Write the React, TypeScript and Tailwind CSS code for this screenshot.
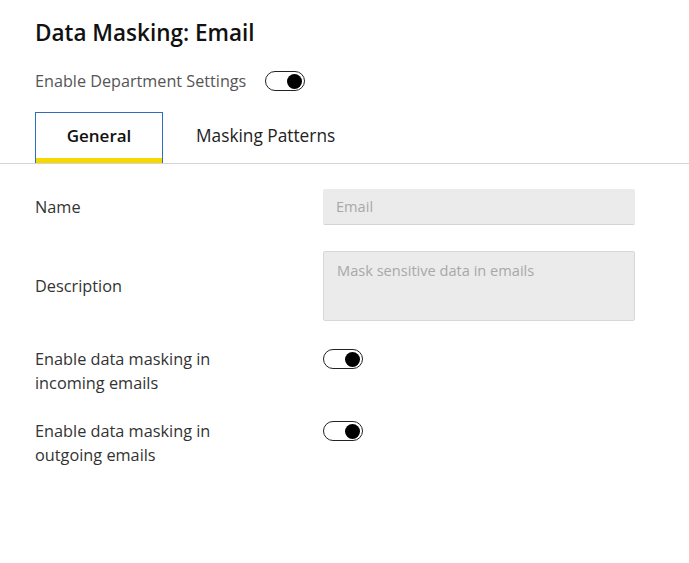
function Toggle() {
  return (
    <div className="flex h-[20px] w-[40px] items-center justify-end rounded-full border-[1.5px] border-[#222] bg-white pr-[2px]">
      <div className="h-[15px] w-[15px] rounded-full bg-black" />
    </div>
  );
}

export default function App() {
  return (
    <div className="min-h-[563px] w-[689px] bg-white font-['Open_Sans',sans-serif] text-[#222]">
      <div className="pt-[18px] pl-[35px]">
        <h1 className="text-[22.5px] font-semibold leading-[30px] text-[#111]">Data Masking: Email</h1>
        <div className="mt-[22px] flex items-center gap-[19px]">
          <span className="text-[16.2px] leading-[22px] text-[#555]">Enable Department Settings</span>
          <Toggle />
        </div>
      </div>

      <div className="mt-[20px] flex border-b border-[#d4d4d4] pl-[35px]">
        <div className="flex h-[51px] w-[128px] flex-col border border-b-0 border-[#2f6fb8]">
          <div className="flex flex-1 items-center justify-center pt-[1px] text-[17px] font-semibold text-[#111]">General</div>
          <div className="h-[5px] bg-[#f5d800]" />
        </div>
        <div className="flex h-[51px] items-center pl-[33px] pb-[4px] text-[17.3px] text-[#222]">Masking Patterns</div>
      </div>

      <div className="pl-[35px]">
        <div className="mt-[25px] grid grid-cols-[288px_312px] items-center">
          <span className="pt-[1px] text-[16.3px] text-[#333]">Name</span>
          <div className="flex h-[36px] items-center rounded-[2px] border-b border-[#d4d4d4] bg-[#ebebec] px-[13px] text-[14.6px] text-[#a8a8a8]">Email</div>
        </div>
        <div className="mt-[26px] grid grid-cols-[288px_312px] items-center">
          <span className="text-[16.3px] text-[#333]">Description</span>
          <div className="h-[70px] rounded-[2px] border border-[#d8d8d8] bg-[#ebebec] px-[13px] pt-[8px] text-[14.6px] text-[#a8a8a8]">Mask sensitive data in emails</div>
        </div>
        <div className="mt-[26px] grid grid-cols-[288px_312px] items-start">
          <span className="w-[200px] text-[16.3px] leading-[24px] text-[#333]">Enable data masking in incoming emails</span>
          <div className="pt-[2px]"><Toggle /></div>
        </div>
        <div className="mt-[24px] grid grid-cols-[288px_312px] items-start">
          <span className="w-[200px] text-[16.3px] leading-[24px] text-[#333]">Enable data masking in outgoing emails</span>
          <div className="pt-[2px]"><Toggle /></div>
        </div>
      </div>
    </div>
  );
}
